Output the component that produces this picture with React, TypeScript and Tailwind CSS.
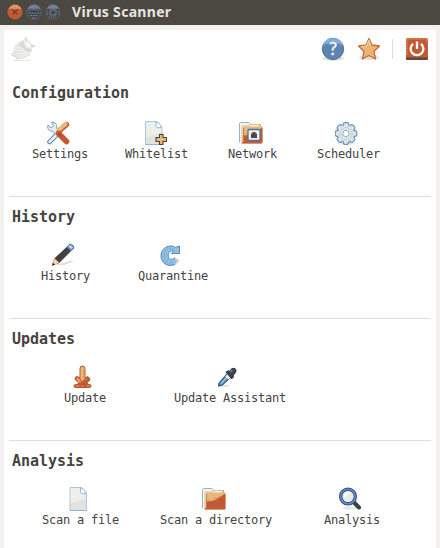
import type { ReactNode } from "react";

const svg = (children: ReactNode, size = 24) => (
  <svg width={size} height={size} viewBox="0 0 24 24" fill="none" className="block shrink-0">
    {children}
  </svg>
);

const ToolsIcon = () =>
  svg(
    <>
      <path d="M3.500 21 14 10.500" stroke="#5d8bbd" strokeWidth="4.600" strokeLinecap="round" />
      <path d="M2 4l3 3 2.500-2.200L5.500 1.500c3.500-.8 6.200 1.800 5 5.500l3 3-3.500 3.500-3.500-3.500C3 10.500.8 7.500 2 4z" fill="#e8ecee" stroke="#6f9cc8" strokeWidth="1" />
      <path d="M3.600 20.900 14 10.500" stroke="#eef2f4" strokeWidth="2.600" strokeLinecap="round" />
      <path d="m13.500 9.500 7-6" stroke="#c4562f" strokeWidth="5.400" strokeLinecap="round" />
      <path d="m13 8.800 6.700-5.800" stroke="#eab878" strokeWidth="4" strokeLinecap="round" />
      <path d="M12.500 12.500 20.500 20.500" stroke="#c25a35" strokeWidth="5.600" strokeLinecap="round" />
      <path d="m12.500 12.500 3 3" stroke="#a04326" strokeWidth="1.500" />
    </>,
  );

const Sheet = () => (
  <>
    <path d="M3.500.5H15l5 5.500v17.500H3.500z" fill="#e2e2de" stroke="#a9c8df" />
    <path d="M4 1h10v6h5.500v4q-8 5-15.500 5z" fill="#eeeeeb" />
    <path d="M5 13h12M6 15h9" stroke="#e2e2de" strokeDasharray="1 1" />
    <path d="M14 1v4.500l1.500 1.200H19C19 3.500 17 1.500 14 1z" fill="#fafafa" stroke="#8ab5d8" strokeWidth=".9" />
    <path d="M3.500 23.500H20" stroke="#8ab5d8" />
  </>
);
const SheetIcon = () => svg(<g transform="translate(-.5 0)"><Sheet /></g>);

const WhitelistIcon = () =>
  svg(
    <>
      <g transform="translate(-1 0)"><Sheet /></g>
      <path d="M16.500 13.500H20v3h3.500v4H20v3h-3.500v-3H13v-4h3.500z" fill="#eab878" stroke="#4b413a" strokeWidth="1.100" />
    </>,
  );

const Folder = () => (
  <>
    <path d="M.5 21.500V2.500L1.500 1.500h8.500l1.500 2h10v3" fill="#f2f4f4" stroke="#8ab5d8" />
    <path d="M3 22V5h7l1-1.500h9V6" fill="#eef0ef" stroke="#eab878" />
    <path d="M4.500 5.500h19V21q0 1.500-1.500 1.500H3z" fill="#eab878" />
    <path d="M4.500 14.500c9 0 11-3.500 19-8V21q0 1.500-1.500 1.500H2l2.500-2z" fill="#c25a35" />
    <path d="M5 14.500 8 12M10 13l4-2.500M14 12l5-3.500" stroke="#d68c59" strokeWidth="1.200" strokeDasharray="1 1" />
    <path d="M4.500 21V7" stroke="#c97a4c" />
  </>
);
const FolderIcon = () => svg(<Folder />);

const NetworkIcon = () =>
  svg(
    <>
      <Folder />
      <rect x="9" y="8.500" width="12" height="11" rx="1" fill="#f1f1ee" stroke="#4a73a6" strokeWidth="1.300" />
      <path d="M12 12.500h1.500V11h3v1.500H18V17h-6z" fill="#4b4741" />
    </>,
  );

const GearIcon = () =>
  svg(
    <g transform="translate(-1 0)">
      <ellipse cx="12" cy="22.500" rx="9" ry="1.300" fill="#e8e8e5" />
      {[0, 45, 90, 135, 180, 225, 270, 315].map((a) => (
        <rect key={a} x="9.200" y="1.700" width="5.600" height="6" rx="1.800" fill="#dfe3e4" stroke="#5f93c6" strokeWidth="1.200" transform={`rotate(${a} 12 12.500)`} />
      ))}
      <circle cx="12" cy="12.500" r="8.200" fill="#dfe2e1" />
      <circle cx="12" cy="12.500" r="6" stroke="#a3c4de" strokeDasharray="1 1" />
      <circle cx="12" cy="12.500" r="3.100" fill="#fff" stroke="#8ab5d8" />
    </g>,
  );

const PencilIcon = () =>
  svg(
    <g transform="translate(-.7 0)">
      <path d="M3 22.500 21 17.500l1 1-9 3.500z" fill="#deded9" />
      <path d="m1 22 2.500-7L18 1.500c2-1.300 5.500 1.500 4.300 4L8 20z" fill="#44413d" />
      <path d="m15.500 4 2.500-2.500c2-1.300 5.500 1.500 4.300 4L19.500 8z" fill="#6c9dcc" stroke="#4f6c8c" strokeWidth=".6" />
      <path d="m18 2.800 3 2.400" stroke="#dfe6ea" strokeWidth="1.500" />
      <path d="m1 22 2.300-6.500L8 20z" fill="#efdfc7" stroke="#e39a5d" strokeWidth=".8" />
      <path d="m.7 22.800 1-3 2 2z" fill="#292724" />
    </g>,
  );

const RestoreIcon = () =>
  svg(
    <>
      <path
        d="M16.500 4.500 20.500 3v7.500H12.500l2-2.500C12 7 9 9.500 9.200 13c.3 3.500 4 4.500 6 2l4.300 2.500C17.500 21 14.500 22.500 11.500 22.500 6 22.500 2 18 2 13 2 7 6.500 3 11.500 3c2 0 3.700.5 5 1.500z"
        fill="#8fbfe3"
        stroke="#5986b8"
        strokeLinejoin="round"
      />
      <path d="M15 6.500C9 3.500 5 8 5 13s4 7.500 9 6.500" stroke="#6f9fcd" strokeDasharray="1.500 1.500" />
      <path d="m16 16 3.500 1.500-3 3.500" stroke="#c9deed" strokeWidth="1.200" />
    </>,
  );

const DownloadIcon = () =>
  svg(
    <g transform="translate(-.5 .5)">
      <rect x="3.500" y="19" width="17" height="3" rx="1.500" fill="#c25a35" stroke="#b9542e" />
      <path d="M9.500 3Q9.500.5 12 .5T14.500 3v9.500l2.500-1.500 2 1.500.5 2-3 2.500 1 2H7l1-2-3.500-3 .5-2.500 2-.5 2.500 1.500z" fill="#c25a35" stroke="#bd5932" strokeLinejoin="round" />
      <path d="M10 3.200q0-2 2-2t2 2V13l-1.800 3-2.200-2.500z" fill="#eab878" />
      <path d="m5.500 12.500 2-.3 2.500 2.500.5 2.500-2.500-.5z" fill="#e2a368" />
      <path d="M5 20.500h4m2 0h2m3 0h3" stroke="#e2a368" />
      <path d="M12.800 5v8" stroke="#c97142" strokeDasharray="1 2" />
      <path d="m15 14.500 1.500-1" stroke="#dfa066" />
    </g>,
  );

const DropperIcon = () =>
  svg(
    <g transform="translate(.7 2.500) scale(.85)">
      <ellipse cx="9" cy="21.500" rx="6" ry="1.500" fill="#e5e5e2" />
      <path d="m2.500 19 9-10.500 4 3.500-9 8.500-4 1z" fill="#7eafd9" stroke="#31567f" strokeWidth="1.600" />
      <path d="m10 10.500 2.500-2.500 4 3.500-2.500 2.500z" fill="#edf1f3" />
      <path d="m11 5.500 2.500-1.500 1.500.5 3-3c2.800-1.500 5.300.6 4.600 3.500L19.500 9v2.500L17.500 13z" fill="#3e4248" stroke="#343c46" strokeWidth="1.200" />
      <path d="m16 5 2.500-1.800" stroke="#6087b5" strokeWidth="2" />
      <path d="m5 18.500 7-7.500" stroke="#c9e0ef" strokeWidth=".8" />
    </g>,
  );

const SearchIcon = () =>
  svg(
    <>
      <ellipse cx="12" cy="21" rx="7" ry="1.800" fill="#e6e6e3" />
      <path d="m15.500 15 5.500 5.500" stroke="#3b3f45" strokeWidth="4" strokeLinecap="round" />
      <circle cx="10" cy="9.500" r="7.300" fill="#f1f3f3" stroke="#2f4f78" strokeWidth="3.500" />
      <circle cx="10" cy="9.500" r="7.300" stroke="#5f8fc2" strokeWidth="1.600" />
      <circle cx="10" cy="9.500" r="5.200" fill="#e9ebea" />
      <path d="M6.500 10q1-4.500 5.500-4.500" stroke="#fff" strokeWidth="2" />
    </>,
  );

const BugIcon = () =>
  svg(
    <>
      <path d="M3 23.500h16" stroke="#e4e4df" />
      <path d="m14 4 .5-4 2 4M20 10l4-1-4-1M3.500 15 1 18l4 2 1.500 3" stroke="#dadad4" strokeWidth="1.300" />
      <ellipse cx="12" cy="12.500" rx="8" ry="10" transform="rotate(42 12 12.500)" fill="#ecece8" stroke="#dcdcd6" strokeDasharray="1.500 1" />
      <path d="m9 6 3-2 1 3 2 3.500 3.500 1.500 2.500-.5-2 3.500-4-.5-3-3.500-3.500-2z" fill="#dadad4" />
      <path d="m14.500 5 4 1 1.500 4-3 .5-2.500-2.500z" fill="#fafaf8" />
      <path d="M5 12h5M4.500 15h9M5 18h9M8 20.500h5" stroke="#d6d6cf" strokeDasharray="1 2" />
    </>,
  );

const HelpIcon = () => (
  <svg width="24" height="24" viewBox="0 0 24 24" className="block">
    <ellipse cx="12" cy="21.500" rx="11" ry="2" fill="#e1e1dd" />
    <circle cx="12" cy="12" r="10.700" fill="#5d83b1" stroke="#46648a" strokeWidth=".8" />
    <path d="M2 8Q4 1.500 12 1.200T22 8Q12 4 2 8z" fill="#7eb1dc" />
    <path d="M3 9h2m2-1h2m2 1h2m2-1h2m2 1h2" stroke="#80afd7" strokeDasharray="1 1" />
    <text x="12" y="18" textAnchor="middle" fontFamily="Lato, sans-serif" fontSize="18" fontWeight="400" fill="#f4f4f2" stroke="#f4f4f2" strokeWidth=".5">?</text>
  </svg>
);

const StarIcon = () =>
  svg(
    <>
      <ellipse cx="12" cy="20.500" rx="10" ry="2.500" fill="#dfdfdb" />
      <path d="m12 1.500 3 6.500 7.500 1-5.500 5.500 1.500 7.500-6.500-3.500L5.500 22 7 14.500 1.500 9 9 8z" fill="#eab475" stroke="#ca6b3c" strokeWidth="1.300" strokeLinejoin="round" />
      <path d="m12 3-2.500 6-5 .7M12 4l1.500 4" stroke="#eedfc3" strokeWidth="1.300" strokeDasharray="1.500 1" />
    </>,
  );

const PowerIcon = () =>
  svg(
    <>
      <rect x="1" y="1" width="22" height="22" rx="1.500" fill="#c25a35" />
      <path d="M1 20.500h22V22l-1 1H2l-1-1z" fill="#654839" />
      <path d="M2 18V2h20v4" stroke="#e19962" strokeDasharray="2 .8" />
      <path d="M8 6.800a6.400 6.400 0 1 0 8 0M12 4.500V12" stroke="#fff" strokeWidth="2.300" />
    </>,
  );

function WindowButton({ kind }: { kind: "close" | "min" | "max" }) {
  const close = kind === "close";
  return (
    <svg width="16" height="16" viewBox="0 0 16 16" fill="none">
      <circle cx="8" cy="8" r="7.200" fill={close ? "#c25a35" : "#4b4741"} stroke={close ? "#c25a35" : "#6582aa"} strokeWidth=".8" strokeDasharray={close ? undefined : "1.500 1"} />
      <path d="M1.800 5Q4 .8 8 .8T14.200 5l-3.200-.5-3 .5-3-.5z" fill={close ? "#e1aa6a" : "#6485b3"} />
      <path d="M3 4h10M5 2l1 2m2-3v3m3-2-1 2" stroke={close ? "#bf5932" : "#bc6845"} strokeDasharray="1 1.500" />
      {close && <path d="m5.500 5.500 5 5m0-5-5 5" stroke="#65412e" strokeWidth="1.200" />}
      {kind === "min" && (
        <>
          <path d="M2 6h12M3 9h10M4 11.500h8M6 14h4" stroke="#6582aa" strokeDasharray="2 .8" />
          <path d="M5 7.500h6" stroke="#35322e" />
        </>
      )}
      {kind === "max" && (
        <>
          <path d="M5 6h6v5H5z" stroke="#6582aa" />
          <path d="M2.500 7v4m11-4v4M4 13h8" stroke="#6582aa" strokeDasharray="1 1" />
        </>
      )}
    </svg>
  );
}

function Item({ icon, label, className }: { icon: ReactNode; label: string; className: string }) {
  return (
    <button className={`flex shrink-0 flex-col items-center ${className}`}>
      <span className="pr-1">{icon}</span>
      <span className="mt-px h-[17px] whitespace-nowrap text-[12px] leading-[17px] tracking-[-0.224px]">{label}</span>
    </button>
  );
}

function Section({
  title,
  children,
  first = false,
  last = false,
}: {
  title: string;
  children: ReactNode;
  first?: boolean;
  last?: boolean;
}) {
  return (
    <section className={`mx-[5px] h-[122px] shrink-0 border-b ${last ? "border-transparent" : "border-[#dcdcd8]"}`}>
      <h2 className={`h-[46px] pl-[3px] text-[15px] font-bold leading-[20px] tracking-[-0.03px] ${first ? "pt-[8px]" : "pt-[10px]"}`}>{title}</h2>
      <div className="flex">{children}</div>
    </section>
  );
}

export default function App() {
  return (
    <div className="flex h-[548px] w-[440px] flex-col overflow-hidden bg-[#f2f1ed] font-['DejaVu_Sans_Mono',monospace] text-[#45433f]">
      <header className="flex h-[25px] shrink-0 items-center bg-[#4b4741] pb-[2px] pl-[7px]">
        <div className="flex gap-[3px]">
          <WindowButton kind="close" />
          <WindowButton kind="min" />
          <WindowButton kind="max" />
        </div>
        <h1 className="ml-[11px] whitespace-nowrap font-['Noto_Sans',sans-serif] text-[14px] font-bold leading-[20px] tracking-[0.3px] text-[#e6e5e1]">Virus Scanner</h1>
      </header>
      <main className="mx-1 mt-[5px] flex flex-1 flex-col overflow-hidden bg-white">
        <div className="flex h-[45px] shrink-0 items-start pl-[7px] pr-[7px] pt-[7px]">
          <BugIcon />
          <div className="ml-auto flex items-center">
            <HelpIcon />
            <span className="ml-3"><StarIcon /></span>
            <span className="ml-[11px] mr-[12px] h-5 w-px bg-[#dcdcd8]" />
            <PowerIcon />
          </div>
        </div>
        <Section title="Configuration" first>
          <Item className="ml-[23px] w-[56px]" icon={<ToolsIcon />} label="Settings" />
          <Item className="ml-[37px] w-[63px]" icon={<WhitelistIcon />} label="Whitelist" />
          <Item className="ml-[40px] w-[49px]" icon={<NetworkIcon />} label="Network" />
          <Item className="ml-[40px] w-[63px]" icon={<GearIcon />} label="Scheduler" />
        </Section>
        <Section title="History">
          <Item className="ml-[32px] w-[49px]" icon={<PencilIcon />} label="History" />
          <Item className="ml-[48px] w-[70px]" icon={<RestoreIcon />} label="Quarantine" />
        </Section>
        <Section title="Updates">
          <Item className="ml-[55px] w-[42px]" icon={<DownloadIcon />} label="Update" />
          <Item className="ml-[68px] w-[112px]" icon={<DropperIcon />} label="Update Assistant" />
        </Section>
        <Section title="Analysis" last>
          <Item className="ml-[33px] w-[77px]" icon={<SheetIcon />} label="Scan a file" />
          <Item className="ml-[41px] w-[112px]" icon={<FolderIcon />} label="Scan a directory" />
          <Item className="ml-[52px] w-[56px]" icon={<SearchIcon />} label="Analysis" />
        </Section>
      </main>
    </div>
  );
}
